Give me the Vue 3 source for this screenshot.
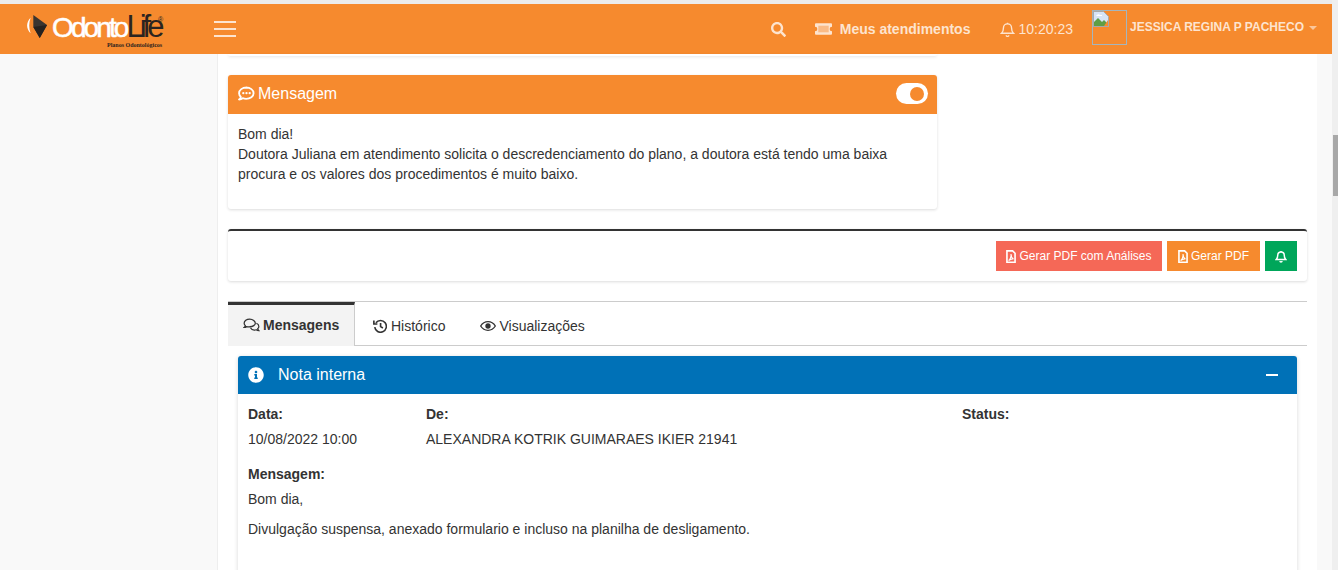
<template>
  <div class="page">
    <div class="top-strip"></div>

    <header class="navbar">
      <div class="logo">
        <svg class="logo-mark" viewBox="0 0 24 26" width="22" height="24">
          <path d="M5 4 C0 9 0 16 5 21 C3 15 3 10 5 4z" fill="#fff" />
          <path d="M8 1 L23 12 L15 26 L8 14z" fill="#3a3530" />
          <path d="M8 14 L23 12 L15 26z" fill="#26221f" />
        </svg>
        <span class="logo-name"><span class="logo-odonto">Odonto</span><span class="logo-life">Life</span></span>
        <span class="logo-reg">®</span>
        <span class="logo-sub">Planos Odontológicos</span>
      </div>

      <button class="burger" aria-label="Menu">
        <span></span><span></span><span></span>
      </button>

      <div class="nav-right">
        <svg class="nav-search" viewBox="0 0 512 512" width="15" height="15">
          <path fill="currentColor" d="M505 442.7L405.3 343c-4.5-4.5-10.6-7-17-7H372c27.6-35.3 44-79.7 44-128C416 93.1 322.9 0 208 0S0 93.1 0 208s93.1 208 208 208c48.3 0 92.7-16.4 128-44v16.3c0 6.4 2.5 12.5 7 17l99.7 99.7c9.4 9.4 24.6 9.4 33.9 0l28.3-28.3c9.4-9.4 9.4-24.6.1-34zM208 336c-70.7 0-128-57.2-128-128 0-70.7 57.2-128 128-128 70.7 0 128 57.2 128 128 0 70.7-57.2 128-128 128z" />
        </svg>
        <span class="nav-link">
          <svg viewBox="0 0 18 12" width="17" height="12">
            <rect x="3" y="2" width="12" height="8" fill="currentColor" opacity="0.55" />
            <path fill="currentColor" fill-rule="evenodd" d="M1 0h16a1 1 0 0 1 1 1v2.500a2.500 2.500 0 0 0 0 5V11a1 1 0 0 1-1 1H1a1 1 0 0 1-1-1V8.500a2.500 2.500 0 0 0 0-5V1a1 1 0 0 1 1-1zM3.500 2.500v7h11v-7z" />
          </svg>
          Meus atendimentos
        </span>
        <span class="nav-clock">
          <svg viewBox="0 0 24 24" width="15" height="15" fill="none" stroke="currentColor" stroke-width="2.200">
            <path d="M12 3a6.500 6.500 0 0 0-6.500 6.500c0 5-1.500 7-3 8.500h19c-1.500-1.500-3-3.500-3-8.500A6.500 6.500 0 0 0 12 3z" />
            <path d="M10 21a2 2 0 0 0 4 0M12 1v2" />
          </svg>
          10:20:23
        </span>
        <span class="avatar">
          <svg viewBox="0 0 16 16" width="16" height="16">
            <path d="M0.500 0.500h10l5 5v10h-15z" fill="#d7e4f7" stroke="#a9a9a9" />
            <path d="M1 15 L1 11 L5 7 L9 11 L11 9 L15 13 V15z" fill="#5f9e45" />
            <path d="M11 15 L15 9 V15z" fill="#f68a2e" />
            <path d="M3 5 q2-3 4-1 h2 v1z" fill="#fff" />
          </svg>
        </span>
        <span class="nav-user">JESSICA REGINA P PACHECO</span>
        <span class="caret"></span>
      </div>
    </header>

    <div class="main">
      <aside class="sidebar"></aside>

      <section class="content">
        <div class="card-sliver"></div>

        <div class="msg-card">
          <div class="msg-head">
            <svg viewBox="0 0 24 24" width="17" height="17" fill="none">
              <path d="M12 3.500c-5.800 0-10.500 3.500-10.500 8 0 2 1 3.800 2.500 5.200-.3 1.500-1.200 2.800-2.500 3.800 2 0 3.800-.7 5.200-1.800 1.500.5 3.100.8 4.800.8 5.800 0 10.500-3.500 10.500-8s-4.700-8-10.500-8z" stroke="#fff" stroke-width="2.600" stroke-linejoin="round" />
              <circle cx="7.500" cy="11.500" r="1.600" fill="#fff" />
              <circle cx="12" cy="11.500" r="1.600" fill="#fff" />
              <circle cx="16.500" cy="11.500" r="1.600" fill="#fff" />
            </svg>
            <span class="msg-title">Mensagem</span>
            <span class="toggle"><span class="toggle-dot"></span></span>
          </div>
          <div class="msg-body">
            Bom dia!<br />
            Doutora Juliana em atendimento solicita o descredenciamento do plano, a doutora está tendo uma baixa procura e os valores dos procedimentos é muito baixo.
          </div>
        </div>

        <div class="actions-card">
          <button class="btn btn-red">
            <svg class="pdf" viewBox="0 0 12 16" width="10" height="13">
              <path fill="none" stroke="currentColor" stroke-width="2" d="M1 1h7l3 3v11H1z" />
              <path fill="none" stroke="currentColor" stroke-width="1.400" d="M3 13c2-1 3.500-5 3-8 0 3 1 5 3 6-2-.4-4 .4-6 2z" />
            </svg>
            Gerar PDF com Análises
          </button>
          <button class="btn btn-orange">
            <svg class="pdf" viewBox="0 0 12 16" width="10" height="13">
              <path fill="none" stroke="currentColor" stroke-width="2" d="M1 1h7l3 3v11H1z" />
              <path fill="none" stroke="currentColor" stroke-width="1.400" d="M3 13c2-1 3.500-5 3-8 0 3 1 5 3 6-2-.4-4 .4-6 2z" />
            </svg>
            Gerar PDF
          </button>
          <button class="btn btn-green" aria-label="Notificar">
            <svg viewBox="0 0 24 24" width="12" height="13" fill="none" stroke="currentColor" stroke-width="3">
              <path d="M12 3a6.500 6.500 0 0 0-6.500 6.500c0 5-1.500 7-3 8.500h19c-1.500-1.500-3-3.500-3-8.500A6.500 6.500 0 0 0 12 3z" />
              <path d="M10 21a2 2 0 0 0 4 0M12 1v2" />
            </svg>
          </button>
        </div>

        <nav class="tabs">
          <div class="tab active">
            <svg viewBox="0 0 24 20" width="17" height="14" fill="none" stroke="currentColor" stroke-width="1.800">
              <path d="M9.500 1.500c-4.500 0-8 2.600-8 6 0 1.400.6 2.600 1.700 3.600-.3 1-1 1.800-1.700 2.400 1.400 0 2.700-.5 3.700-1.200 1.300.4 2.800.4 4.300.2 4.500 0 8-2.600 8-5S14 1.500 9.500 1.500z" />
              <path d="M19 7.500c2.200 1 3.500 2.700 3.500 4.500 0 1.200-.6 2.300-1.700 3.200.2.900.8 1.800 1.700 2.800-1.500 0-2.800-.5-3.800-1.200-3 .8-6.700-.1-8.200-2.800" />
            </svg>
            Mensagens
          </div>
          <div class="tab">
            <svg viewBox="0 0 24 24" width="14" height="14" fill="none" stroke="currentColor" stroke-width="2.800">
              <path d="M5 6.500A10 10 0 1 1 3 14" />
              <path d="M1.500 2.500v6h6" />
              <path d="M13 7v6l4 2.500" />
            </svg>
            Histórico
          </div>
          <div class="tab tab-views">
            <svg viewBox="0 0 24 16" width="16" height="12">
              <path fill="none" stroke="currentColor" stroke-width="2" d="M1 8c2.500-4 6.500-6.500 11-6.500S20.500 4 23 8c-2.500 4-6.500 6.500-11 6.500S3.500 12 1 8z" />
              <circle cx="12" cy="8" r="4" fill="currentColor" />
            </svg>
            Visualizações
          </div>
        </nav>

        <div class="tab-pane">
          <div class="note">
            <div class="note-head">
              <svg viewBox="0 0 512 512" width="16" height="16">
                <path fill="#fff" d="M256 8C119.043 8 8 119.083 8 256c0 136.997 111.043 248 248 248s248-111.003 248-248C504 119.083 392.957 8 256 8zm0 110c23.196 0 42 18.804 42 42s-18.804 42-42 42-42-18.804-42-42 18.804-42 42-42zm56 254c0 6.627-5.373 12-12 12h-88c-6.627 0-12-5.373-12-12v-24c0-6.627 5.373-12 12-12h12v-64h-12c-6.627 0-12-5.373-12-12v-24c0-6.627 5.373-12 12-12h64c6.627 0 12 5.373 12 12v100h12c6.627 0 12 5.373 12 12v24z" />
              </svg>
              <span class="note-title">Nota interna</span>
              <span class="note-minus"></span>
            </div>
            <div class="note-body">
              <div class="fields">
                <div>
                  <div class="label">Data:</div>
                  <div class="value">10/08/2022 10:00</div>
                </div>
                <div>
                  <div class="label">De:</div>
                  <div class="value">ALEXANDRA KOTRIK GUIMARAES IKIER 21941</div>
                </div>
                <div>
                  <div class="label">Status:</div>
                </div>
              </div>
              <div class="label msg-label">Mensagem:</div>
              <p class="note-line first">Bom dia,</p>
              <p class="note-line">Divulgação suspensa, anexado formulario e incluso na planilha de desligamento.</p>
            </div>
          </div>
        </div>
      </section>

      <div class="gutter"></div>
    </div>

    <div class="scrollbar"><span class="thumb"></span></div>
  </div>
</template>

<script setup>
</script>

<style>
html, body {
  margin: 0;
  overflow: hidden;
}
</style>

<style scoped>
.page {
  position: relative;
  width: 1338px;
  height: 570px;
  overflow: hidden;
  background: #f9f9f9;
  font-family: "Liberation Sans", Arial, sans-serif;
  font-size: 14px;
  color: #333;
}

.top-strip {
  height: 4px;
  background: #ececec;
}

.navbar {
  display: flex;
  align-items: center;
  width: 1332px;
  height: 50px;
  background: #f68a2e;
  color: #fff;
}

.logo {
  position: relative;
  width: 170px;
  height: 50px;
  flex: none;
}

.logo-mark {
  position: absolute;
  left: 26px;
  top: 10px;
}

.logo-name {
  position: absolute;
  left: 52px;
  top: 11px;
  display: flex;
  align-items: baseline;
  height: 24px;
  font-size: 28px;
  line-height: 24px;
  white-space: nowrap;
}

.logo-odonto {
  color: #fff;
  letter-spacing: -2.900px;
  -webkit-text-stroke: 0.5px #fff;
}

.logo-life {
  color: #2b2420;
  font-size: 31px;
  line-height: 24px;
  letter-spacing: -4px;
}

.logo-reg {
  position: absolute;
  left: 158px;
  top: 12px;
  color: #2b2420;
  font-size: 7px;
  line-height: 8px;
}

.logo-sub {
  position: absolute;
  left: 107px;
  top: 38px;
  color: #2b2420;
  font-family: "Liberation Serif", serif;
  font-size: 6px;
  font-weight: 700;
  line-height: 7px;
  white-space: nowrap;
}

.burger {
  display: flex;
  flex-direction: column;
  gap: 5px;
  width: 22px;
  margin-left: 44px;
  padding: 0;
  border: 0;
  background: none;
}

.burger span {
  height: 2px;
  background: #fde4cf;
}

.nav-right {
  display: flex;
  align-items: center;
  margin-left: auto;
  color: #fde4cf;
}

.nav-search {
  margin-right: 29px;
}

.nav-link {
  display: flex;
  align-items: center;
  gap: 8px;
  font-weight: 700;
  margin-right: 30px;
}

.nav-clock {
  display: flex;
  align-items: center;
  gap: 3px;
  margin-right: 19px;
}

.avatar {
  box-sizing: border-box;
  display: block;
  width: 35px;
  height: 35px;
  border: 1px solid #a5b5bd;
  margin: 0 3px 4px 0;
  line-height: 0;
}

.nav-user {
  font-size: 12px;
  font-weight: 700;
  margin-bottom: 4px;
}

.caret {
  width: 0;
  height: 0;
  margin: 0 15px 3px 5px;
  border-left: 4px solid transparent;
  border-right: 4px solid transparent;
  border-top: 4px solid #fbc79b;
}

.main {
  display: flex;
  height: 516px;
}

.sidebar {
  flex: none;
  width: 217px;
  background: #f9f9f9;
  border-right: 1px solid #eee;
}

.content {
  flex: none;
  box-sizing: border-box;
  width: 1099px;
  padding: 0 10px;
  background: #fff;
}

.gutter {
  flex: none;
  width: 15px;
  background: #f9f9f9;
}

.card-sliver {
  width: 709px;
  height: 2px;
  border-radius: 0 0 4px 4px;
  background: #fff;
  box-shadow: 0 1px 3px rgba(0, 0, 0, 0.12);
}

.msg-card {
  width: 709px;
  height: 134px;
  margin-top: 19px;
  border-radius: 3px;
  overflow: hidden;
  background: #fff;
  box-shadow: 0 1px 3px rgba(0, 0, 0, 0.14);
}

.msg-head {
  display: flex;
  align-items: center;
  gap: 3px;
  height: 39px;
  padding: 0 9px 2px 10px;
  box-sizing: border-box;
  background: #f68a2e;
  color: #fff;
}

.msg-title {
  font-size: 16px;
}

.toggle {
  display: flex;
  align-items: center;
  justify-content: flex-end;
  box-sizing: border-box;
  width: 32px;
  height: 21px;
  margin-left: auto;
  padding-right: 4px;
  border-radius: 11px;
  background: #fff;
}

.toggle-dot {
  width: 14px;
  height: 14px;
  border-radius: 50%;
  background: #f68a2e;
}

.msg-body {
  padding: 10px;
  line-height: 20px;
}

.actions-card {
  display: flex;
  justify-content: flex-end;
  gap: 5px;
  box-sizing: border-box;
  height: 52px;
  margin-top: 20px;
  padding: 10px;
  border-top: 2px solid #333;
  border-radius: 3px;
  background: #fff;
  box-shadow: 0 1px 3px rgba(0, 0, 0, 0.14);
}

.btn {
  display: flex;
  align-items: center;
  justify-content: center;
  gap: 3px;
  height: 30px;
  padding: 0;
  border: 0;
  color: #fff;
  font-family: inherit;
  font-size: 12px;
}

.btn-red {
  width: 166px;
  background: #f56857;
}

.btn-orange {
  width: 93px;
  background: #f68a2e;
}

.btn-green {
  width: 32px;
  background: #00a65a;
}

.tabs {
  display: flex;
  box-sizing: border-box;
  height: 45px;
  margin-top: 20px;
  border-top: 1px solid #ccc;
  border-bottom: 1px solid #ccc;
}

.tab {
  display: flex;
  align-items: center;
  gap: 4px;
  padding: 5px 18px 0;
}

.tab-views {
  gap: 3px;
  padding-left: 17px;
}

.tab.active {
  gap: 3px;
  width: 127px;
  box-sizing: border-box;
  height: 44px;
  padding: 0 0 2px 15px;
  border-top: 3px solid #333;
  border-right: 1px solid #ccc;
  background: #f3f3f3;
  font-weight: 700;
}

.tab-pane {
  height: 224px;
  padding: 10px 10px 0;
  background: #fff;
}

.note {
  height: 300px;
  border-radius: 3px 3px 0 0;
  background: #fff;
  box-shadow: 0 1px 4px rgba(0, 0, 0, 0.16);
}

.note-head {
  display: flex;
  align-items: center;
  height: 38px;
  padding: 0 10px;
  border-radius: 3px 3px 0 0;
  background: #0071b7;
  color: #fff;
}

.note-title {
  margin-left: 14px;
  font-size: 16px;
}

.note-minus {
  width: 12px;
  height: 2px;
  margin-left: auto;
  margin-right: 9px;
  background: #fff;
}

.note-body {
  padding: 10px;
}

.fields {
  display: grid;
  grid-template-columns: 178px 536px 1fr;
}

.label {
  font-weight: 700;
  line-height: 20px;
}

.value {
  margin-top: 5px;
  line-height: 20px;
}

.msg-label {
  margin-top: 15px;
}

.note-line {
  margin: 10px 0 0;
  line-height: 20px;
}

.note-line.first {
  margin-top: 5px;
}

.scrollbar {
  position: absolute;
  top: 0;
  right: 0;
  width: 6px;
  height: 570px;
  background: #efefef;
}

.thumb {
  position: absolute;
  top: 135px;
  left: 1px;
  width: 5px;
  height: 61px;
  background: #a8a8a8;
}
</style>
